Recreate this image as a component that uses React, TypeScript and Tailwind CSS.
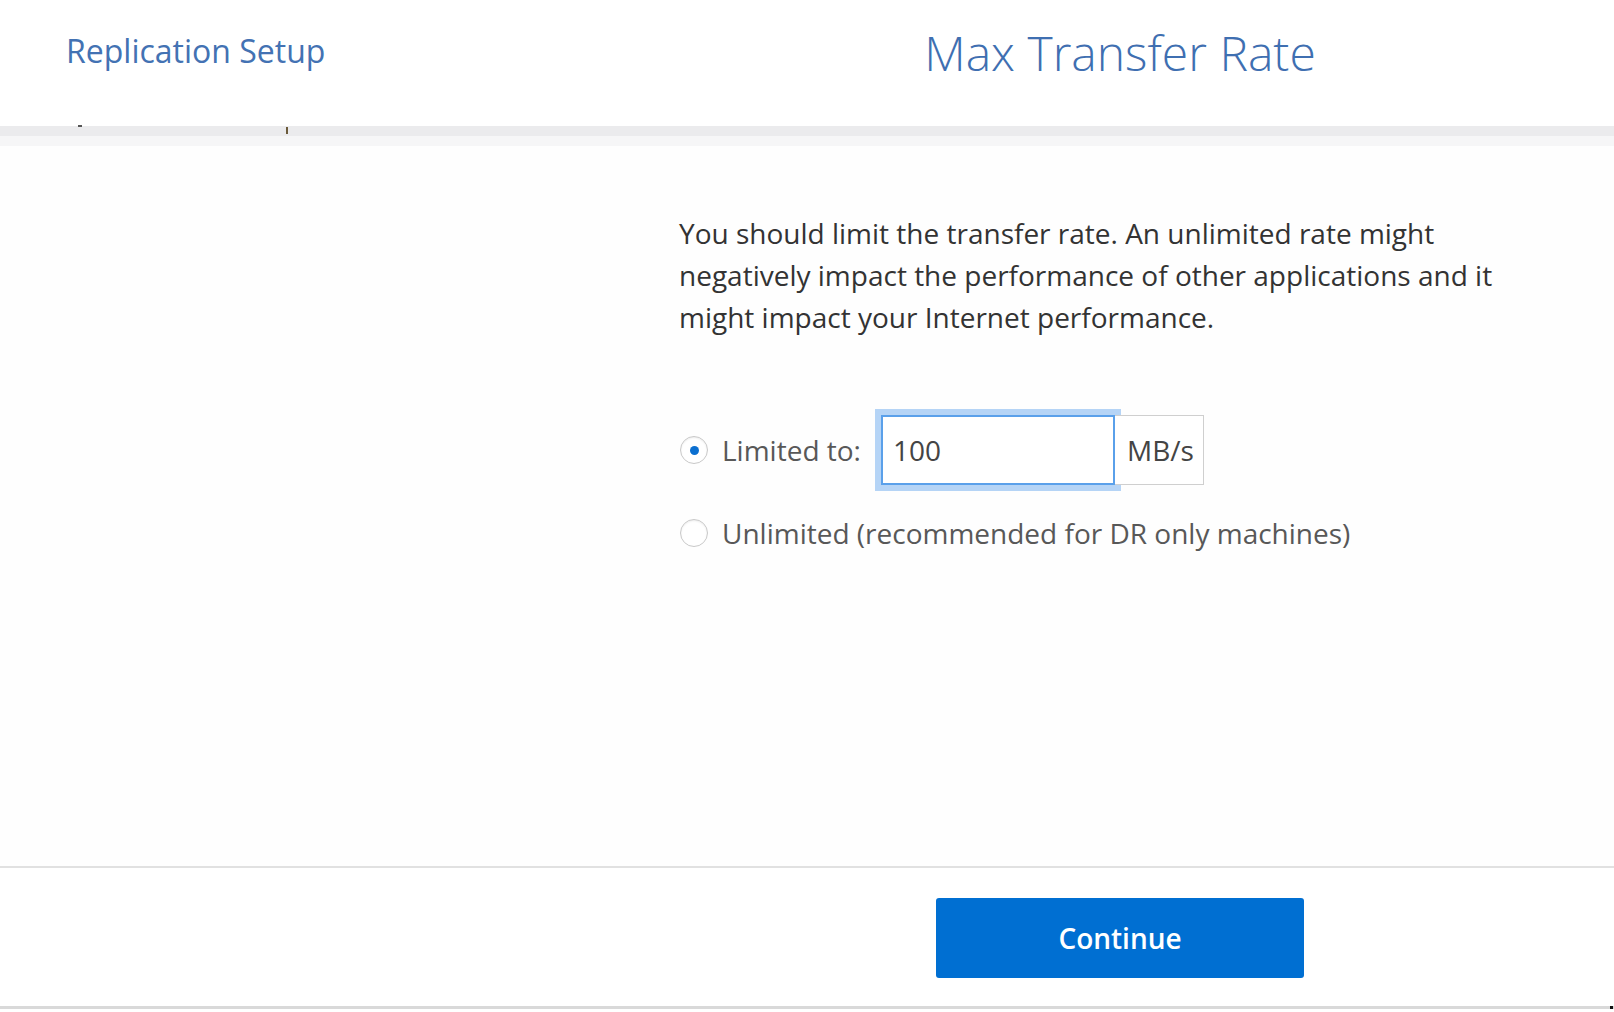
import React from "react";

export default function App() {
  const font = { fontFamily: '"Open Sans", "Noto Sans", Arial, sans-serif' };
  return (
    <div className="w-[1614px] h-[1012px] bg-white flex flex-col overflow-hidden" style={font}>
      {/* Header */}
      <div className="h-[126px] flex items-start shrink-0 bg-white">
        <div className="w-[626px] pl-[66px] pt-[29px]">
          <span className="text-[32px] leading-[44px] text-[#4372b3]">Replication Setup</span>
        </div>
        <div className="flex-1 flex justify-center pt-[22px]">
          <span className="text-[48px] leading-[62px] font-light text-[#3f6fb1]">Max Transfer Rate</span>
        </div>
      </div>
      {/* shadow band */}
      <div className="h-[10px] bg-[#ebebed] shrink-0 flex items-start">
        <span className="ml-[78px] mt-[-1px] w-[4px] h-[2px] bg-[#555]" />
        <span className="ml-[204px] mt-[1px] w-[2px] h-[7px] bg-[#6b5a3a]" />
      </div>
      <div className="h-[10px] bg-[#f6f6f7] shrink-0" />
      {/* Main */}
      <div className="h-[720px] shrink-0 flex bg-[#fefefe]">
        <div className="w-[626px] shrink-0" />
        <div className="flex-1 flex justify-center">
          <div className="w-[882px] pt-[66px]">
            <p className="text-[28px] leading-[42px] text-[#333]">
              You should limit the transfer rate. An unlimited rate might negatively impact the performance of other applications and it might impact your Internet performance.
            </p>
            <div className="mt-[71px] flex items-center h-[82px]">
              <span className="ml-[1px] w-[28px] h-[28px] rounded-full border border-[#c9c9c9] bg-white flex items-center justify-center shadow-[inset_0_1px_2px_rgba(0,0,0,0.08)]">
                <span className="w-[9px] h-[9px] rounded-full bg-[#0b6fd0]" />
              </span>
              <span className="ml-[14px] text-[28px] text-[#585858]">Limited to:</span>
              <div className="ml-[14px] flex items-stretch">
                <div className="p-[6px] bg-[#b5d4f6]">
                  <div className="w-[234px] h-[70px] border-2 border-[#5aa0ea] bg-white flex items-center pl-[10px] text-[28px] text-[#444]">
                    100
                  </div>
                </div>
                <div className="my-[6px] ml-[-6px] w-[89px] h-[70px] border border-[#cfcfcf] border-l-0 bg-white flex items-center pl-[12px] text-[28px] text-[#444]">
                  MB/s
                </div>
              </div>
            </div>
            <div className="mt-[22px] flex items-center h-[40px]">
              <span className="ml-[1px] w-[28px] h-[28px] rounded-full border border-[#c9c9c9] bg-white shadow-[inset_0_1px_2px_rgba(0,0,0,0.08)]" />
              <span className="ml-[14px] text-[28px] text-[#585858]">Unlimited (recommended for DR only machines)</span>
            </div>
          </div>
        </div>
      </div>
      {/* Footer */}
      <div className="h-[2px] bg-[#e1e1e1] shrink-0" />
      <div className="h-[138px] shrink-0 flex bg-white">
        <div className="w-[626px] shrink-0" />
        <div className="flex-1 flex justify-center pt-[30px]">
          <button className="w-[368px] h-[80px] rounded-[3px] bg-[#006fd2] text-white text-[28px] font-semibold">
            Continue
          </button>
        </div>
      </div>
      <div className="h-[3px] bg-[#d9d9d9] shrink-0 flex justify-end">
        <span className="w-[3px] h-[6px] bg-[#111] mr-[1px]" />
      </div>
      <div className="flex-1 bg-white" />
    </div>
  );
}
